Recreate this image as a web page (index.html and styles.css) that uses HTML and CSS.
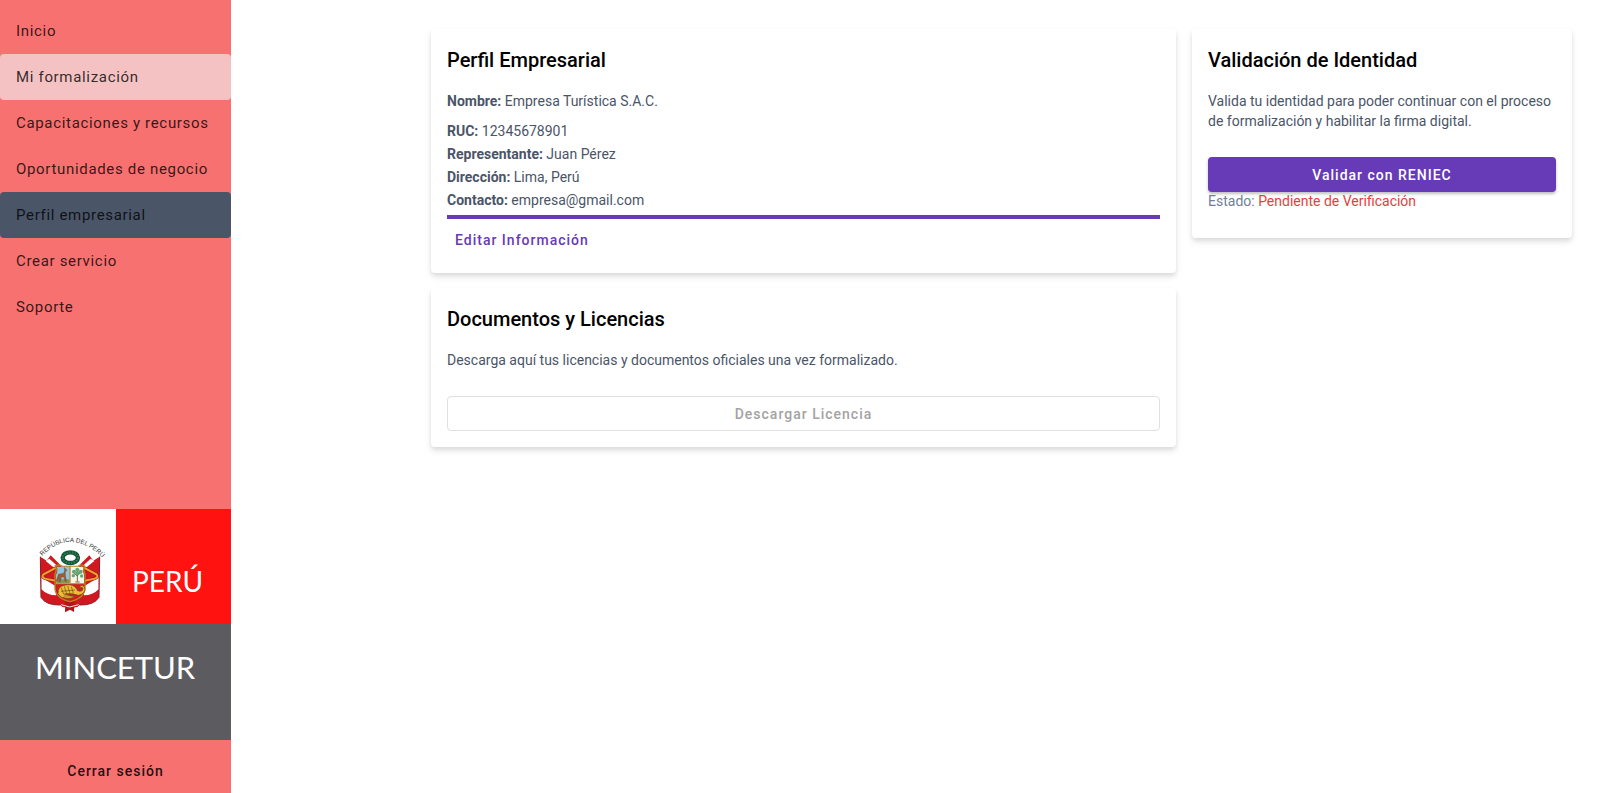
FILE: index.html
```html
<!DOCTYPE html>
<html lang="es">
<head>
<meta charset="utf-8">
<meta name="viewport" content="width=device-width, initial-scale=1">
<title>Perfil Empresarial</title>
<link rel="stylesheet" href="styles.css">
</head>
<body>
<div class="app">
  <aside class="sidebar">
    <nav class="menu">
      <a class="menu-item" href="#inicio">Inicio</a>
      <a class="menu-item hovered" href="#formalizacion">Mi formalización</a>
      <a class="menu-item" href="#capacitaciones">Capacitaciones y recursos</a>
      <a class="menu-item" href="#oportunidades">Oportunidades de negocio</a>
      <a class="menu-item active" href="#perfil" aria-current="page">Perfil empresarial</a>
      <a class="menu-item" href="#servicio">Crear servicio</a>
      <a class="menu-item" href="#soporte">Soporte</a>
    </nav>
    <svg class="logo" viewBox="0 0 231 231" role="img" aria-label="PERÚ MINCETUR">
      <rect width="231" height="231" fill="#5c5b60"/>
      <rect width="116" height="115" fill="#fff"/>
      <rect x="116" width="115" height="115" fill="#ff120f"/>
      <g transform="translate(30 21) scale(.3333)">
        <path id="arc" d="M37 78Q78 34 124 36Q172 38 216 82" fill="none"/>
        <text class="motto"><textPath href="#arc">REPÚBLICA DEL PERÚ</textPath></text>
        <!-- flags -->
        <path d="M31 80L50 92L62 76L92 106V196H120V231Q100 236 90 225Q48 226 33 202Z" fill="#cf1820"/>
        <path d="M209 80L190 92L178 76L148 106V196H120V231Q140 236 150 225Q192 226 207 202Z" fill="#cf1820"/>
        <path d="M47 93L58 86L82 108L76 116ZM34 142L80 170L78 196Q52 196 34 178Z" fill="#fff"/>
        <path d="M193 93L182 86L158 108L164 116ZM206 142L160 170L162 196Q188 196 206 178Z" fill="#fff"/>
        <path d="M31 80L33 202Q48 226 90 225M209 80L207 202Q192 226 150 225" fill="none" stroke="#8e1b20" stroke-width="3"/>
        <path d="M80 112L42 132Q32 140 45 146L80 153M160 112L198 132Q208 140 195 146L160 153" fill="none" stroke="#8d2415" stroke-width="9"/>
        <path d="M80 112L42 132Q32 140 45 146L80 153M160 112L198 132Q208 140 195 146L160 153" fill="none" stroke="#f5a22d" stroke-width="6"/>
        <path d="M106 211H134L132 246L120 239L105 247Z" fill="#b5121c"/>
        <path d="M94 224L119 231L146 224" fill="none" stroke="#f3dede" stroke-width="3"/>
        <!-- shield -->
        <path d="M76 108L88 104L96 109H144L153 104L164 108Q158 119 165 132V176Q164 203 120 215Q76 203 75 176V132Q82 119 76 108Z" fill="#c9211e" stroke="#b88521" stroke-width="4"/>
        <path d="M80 110H119V160H78V134Q85 122 80 110Z" fill="#8bc7df"/>
        <path d="M121 110H160Q156 122 162 134V160H121Z" fill="#f3f7e9"/>
        <path d="M120 108V161M77 161H163" stroke="#caa33b" stroke-width="3"/>
        <path d="M80 148H118V159H79Z" fill="#819653"/>
        <path d="M103 113L108 117L111 122L106 124V134L109 154H105L102 141H94L91 155H87L86 143L82 154L79 153L85 133L101 130L104 121Z" fill="#a35b32" stroke="#643820" stroke-width="1"/>
        <path d="M142 122V155M142 138L132 130M142 137L152 128M136 156H149" fill="none" stroke="#766541" stroke-width="3"/>
        <g fill="#63a676"><circle cx="142" cy="119" r="6"/><circle cx="132" cy="125" r="6"/><circle cx="152" cy="125" r="6"/><circle cx="130" cy="137" r="5"/><circle cx="155" cy="138" r="5"/><circle cx="142" cy="130" r="6"/></g>
        <path d="M84 192Q82 168 106 165Q133 160 143 182Q158 187 159 176Q158 169 149 174Q151 161 164 171Q169 191 145 196Q126 188 103 192L134 200Q120 209 93 201Z" fill="#edbd36" stroke="#704719" stroke-width="2"/>
        <path d="M94 173L101 193M103 169L110 192M113 168L120 190M124 170L130 190M93 184L135 180M101 198H127" fill="none" stroke="#704719" stroke-width="2"/>
        <!-- laurel wreath -->
        <ellipse cx="121" cy="83" rx="23" ry="16" fill="none" stroke="#144f35" stroke-width="13"/>
        <ellipse cx="121" cy="83" rx="23" ry="16" fill="none" stroke="#267c4e" stroke-width="7" stroke-dasharray="5 3"/>
      </g>
      <text class="logo-country" x="132" y="83">PERÚ</text>
      <text class="logo-ministry" x="35" y="170">MINCETUR</text>
    </svg>
    <button class="logout" type="button">Cerrar sesión</button>
  </aside>
  <main class="content">
    <div class="column">
      <section class="card">
        <h2 class="card-title">Perfil Empresarial</h2>
        <p class="text"><strong>Nombre:</strong> Empresa Turística S.A.C.</p>
        <ul class="details">
          <li><strong>RUC:</strong> 12345678901</li>
          <li><strong>Representante:</strong> Juan Pérez</li>
          <li><strong>Dirección:</strong> Lima, Perú</li>
          <li><strong>Contacto:</strong> empresa@gmail.com</li>
        </ul>
        <div class="progress"></div>
        <button class="btn btn-text" type="button">Editar Información</button>
      </section>
      <section class="card">
        <h2 class="card-title">Documentos y Licencias</h2>
        <p class="text">Descarga aquí tus licencias y documentos oficiales una vez formalizado.</p>
        <button class="btn btn-outlined" type="button" disabled>Descargar Licencia</button>
      </section>
    </div>
    <div class="column">
      <section class="card card-identity">
        <h2 class="card-title">Validación de Identidad</h2>
        <p class="text">Valida tu identidad para poder continuar con el proceso de formalización y habilitar la firma digital.</p>
        <button class="btn btn-filled" type="button">Validar con RENIEC</button>
        <p class="status">Estado: <span class="pending">Pendiente de Verificación</span></p>
      </section>
    </div>
  </main>
</div>
</body>
</html>
```
FILE: styles.css
```css
* { box-sizing: border-box; }
body { margin: 0; background: #fff; font-family: Roboto, "Liberation Sans", sans-serif; font-size: 14px; }
h2, p, ul { margin: 0; padding: 0; }
ul { list-style: none; }
button { font: inherit; cursor: pointer; }

.app { display: grid; grid-template-columns: 231px 1fr; min-height: 100vh; }

.sidebar { display: flex; flex-direction: column; background: #f87171; }
.menu { display: flex; flex-direction: column; padding-top: 8px; }
.menu-item {
  padding: 0 16px;
  border-radius: 4px;
  color: rgba(0, 0, 0, .8);
  font-size: 15px;
  line-height: 46px;
  letter-spacing: .045em;
  text-decoration: none;
  white-space: nowrap;
}
.hovered { background: #f4c2c3; }
.active { background: #4a5568; }
.logo { display: block; width: 100%; margin-top: auto; }
.motto { font-family: "Liberation Sans", Arial, sans-serif; font-size: 19px; fill: #333; }
.logo-country, .logo-ministry { font-family: Lato, "Open Sans", sans-serif; fill: #fff; }
.logo-country { font-size: 28px; }
.logo-ministry { font-size: 31px; }
.logout {
  padding: 10px 0 0;
  border: 0;
  background: none;
  color: rgba(0, 0, 0, .87);
  font-weight: 500;
  line-height: 43px;
  letter-spacing: 1px;
}

.content {
  display: grid;
  grid-template-columns: 149fr 76fr;
  gap: 16px;
  align-items: start;
  padding: 29px 28px 29px 200px;
}
.column { display: grid; gap: 15px; }
.card {
  display: flex;
  flex-direction: column;
  padding: 16px;
  border-radius: 4px;
  background: #fff;
  box-shadow: 0 4px 6px rgba(0, 0, 0, .1), 0 2px 4px rgba(0, 0, 0, .06);
}
.card-title { margin-bottom: 16px; color: #000; font-size: 20px; font-weight: 500; line-height: 30px; }
.text { color: #4a5568; line-height: 20px; }
.details { margin-top: 9px; color: #4a5568; line-height: 23px; }
.progress { height: 4px; margin: 3px 0; background: #673ab7; }

.btn { height: 35px; border: 0; border-radius: 4px; font-weight: 500; letter-spacing: 1px; }
.btn-text { align-self: flex-start; padding: 0 8px; background: none; color: #673ab7; }
.btn-outlined, .btn-filled { margin-top: 26px; }
.btn-outlined { border: 1px solid #e0e0e0; background: #fff; color: #a3a3a3; cursor: default; }
.btn-filled { background: #673ab7; color: #fff; box-shadow: 0 2px 3px rgba(0, 0, 0, .25); }
.card-identity { padding-bottom: 28px; }
.status { color: #718096; line-height: 18px; }
.pending { color: #e53e3e; }
```
